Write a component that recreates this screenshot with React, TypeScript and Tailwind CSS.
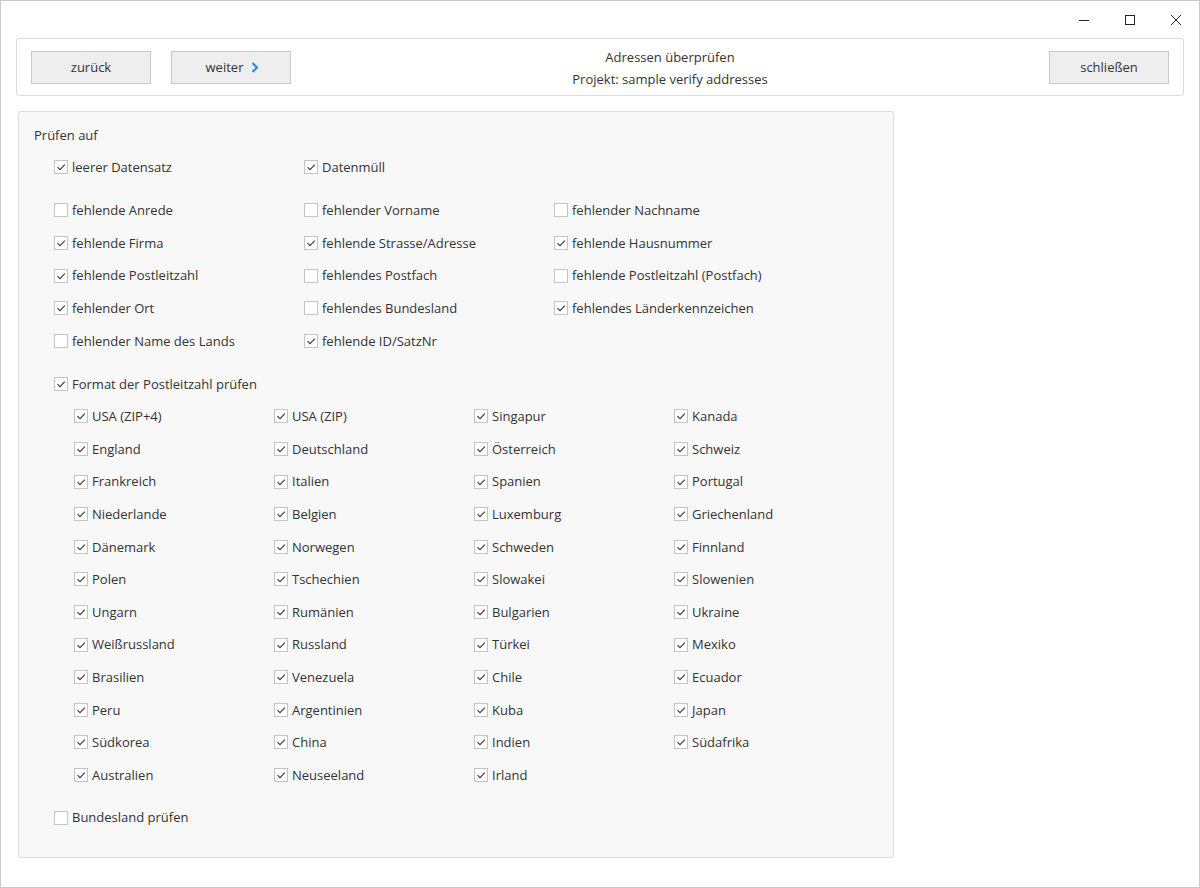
import React from "react";

type Item = [string, boolean];

const general: Item[][] = [
  [["fehlende Anrede", false], ["fehlender Vorname", false], ["fehlender Nachname", false]],
  [["fehlende Firma", true], ["fehlende Strasse/Adresse", true], ["fehlende Hausnummer", true]],
  [["fehlende Postleitzahl", true], ["fehlendes Postfach", false], ["fehlende Postleitzahl (Postfach)", false]],
  [["fehlender Ort", true], ["fehlendes Bundesland", false], ["fehlendes Länderkennzeichen", true]],
  [["fehlender Name des Lands", false], ["fehlende ID/SatzNr", true]],
];

const countries = [
  "USA (ZIP+4)", "USA (ZIP)", "Singapur", "Kanada",
  "England", "Deutschland", "Österreich", "Schweiz",
  "Frankreich", "Italien", "Spanien", "Portugal",
  "Niederlande", "Belgien", "Luxemburg", "Griechenland",
  "Dänemark", "Norwegen", "Schweden", "Finnland",
  "Polen", "Tschechien", "Slowakei", "Slowenien",
  "Ungarn", "Rumänien", "Bulgarien", "Ukraine",
  "Weißrussland", "Russland", "Türkei", "Mexiko",
  "Brasilien", "Venezuela", "Chile", "Ecuador",
  "Peru", "Argentinien", "Kuba", "Japan",
  "Südkorea", "China", "Indien", "Südafrika",
  "Australien", "Neuseeland", "Irland",
];

function Check({ label, checked }: { label: string; checked: boolean }) {
  return (
    <label className="flex h-[32.6px] items-center gap-[4px] whitespace-nowrap">
      <span className="flex h-[14px] w-[14px] shrink-0 items-center justify-center border border-[#c4c4c4] bg-white">
        {checked && (
          <svg width="12" height="12" viewBox="0 0 12 12">
            <path d="M2.5 6.2 L5 8.7 L9.8 3.6" fill="none" stroke="#3a3a3a" strokeWidth="1.1" />
          </svg>
        )}
      </span>
      <span className="pt-[1px]">{label}</span>
    </label>
  );
}

function Btn({ children }: { children: React.ReactNode }) {
  return (
    <button className="flex h-[33px] w-[120px] items-center justify-center gap-[8px] border border-[#c8c8c8] bg-[#eeeeee] pt-[2px] text-[#333]">
      {children}
    </button>
  );
}

export default function App() {
  return (
    <div className="flex h-[888px] w-[1200px] flex-col border border-[#c8c8c8] bg-white font-['Segoe_UI','Open_Sans',sans-serif] text-[13px] text-[#333]">
      <div className="flex h-[37px] shrink-0 items-center justify-end">
        <svg width="12" height="12" viewBox="0 0 12 12" className="mr-[34px]">
          <path d="M1 6.5 H11" stroke="#222" strokeWidth="1" />
        </svg>
        <svg width="12" height="12" viewBox="0 0 12 12" className="mr-[34px]">
          <rect x="1.5" y="1.5" width="9" height="9" fill="none" stroke="#222" strokeWidth="1" />
        </svg>
        <svg width="12" height="12" viewBox="0 0 12 12" className="mr-[17px]">
          <path d="M1 1 L11 11 M11 1 L1 11" stroke="#222" strokeWidth="1" />
        </svg>
      </div>

      <div className="mx-[15px] flex h-[58px] shrink-0 items-center rounded-[3px] border border-[#dcdcdc] bg-white px-[14px]">
        <Btn>zurück</Btn>
        <div className="ml-[20px]">
          <Btn>
            <span className="pl-[3px]">weiter</span>
            <svg width="8" height="11" viewBox="0 0 8 11" className="-mt-[2px]">
              <path d="M1.5 1 L6 5.5 L1.5 10" fill="none" stroke="#1e88e5" strokeWidth="2" />
            </svg>
          </Btn>
        </div>
        <div className="mt-[2px] flex flex-1 flex-col items-center leading-[22px]">
          <span>Adressen überprüfen</span>
          <span>Projekt: sample verify addresses</span>
        </div>
        <Btn>schließen</Btn>
      </div>

      <div className="ml-[17px] mt-[15px] flex h-[747px] w-[876px] flex-col rounded-[3px] border border-[#dcdcdc] bg-[#f8f8f8] pl-[15px] pt-[7px]">
        <div className="flex h-[32px] items-center pt-[1px]">Prüfen auf</div>
        <div className="grid grid-cols-[250px_250px_250px] pl-[20px]">
          <Check label="leerer Datensatz" checked />
          <Check label="Datenmüll" checked />
        </div>
        <div className="mt-[10.5px] grid grid-cols-[250px_250px_250px] pl-[20px]">
          {general.flatMap((row, i) =>
            [0, 1, 2].map((j) =>
              row[j] ? (
                <Check key={`${i}-${j}`} label={row[j][0]} checked={row[j][1]} />
              ) : (
                <div key={`${i}-${j}`} />
              )
            )
          )}
        </div>
        <div className="mt-[10.5px] pl-[20px]">
          <Check label="Format der Postleitzahl prüfen" checked />
        </div>
        <div className="grid grid-cols-[200px_200px_200px_200px] pl-[40px]">
          {countries.map((c) => (
            <Check key={c} label={c} checked />
          ))}
        </div>
        <div className="mt-[10px] pl-[20px]">
          <Check label="Bundesland prüfen" checked={false} />
        </div>
      </div>
    </div>
  );
}
